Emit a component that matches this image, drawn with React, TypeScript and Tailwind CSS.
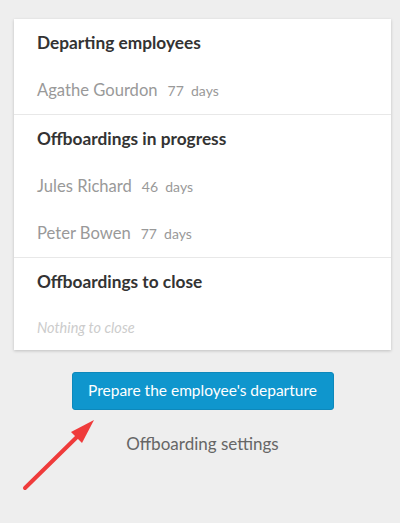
import React from "react";

const font = { fontFamily: '"Lato", "Open Sans", sans-serif' };

function Title({ children }: { children: React.ReactNode }) {
  return (
    <div className="h-[48px] flex items-center px-[23px] text-[17.3px] font-bold text-[#333333]">
      {children}
    </div>
  );
}

function Person({ name, days }: { name: string; days: number }) {
  return (
    <div className="h-[47px] flex items-center px-[23px] text-[#999999]">
      <span className="text-[16.6px]">{name}</span>
      <span className="text-[14px] ml-[10px]">{days}&nbsp; days</span>
    </div>
  );
}

export default function App() {
  return (
    <div className="relative w-[400px] h-[523px] bg-[#eeeeee] overflow-hidden" style={font}>
      <div className="ml-[14px] w-[377px] pt-[19px] flex flex-col items-center">
        <div className="w-full bg-white shadow-[0_1px_3px_rgba(0,0,0,0.2)]">
          <div className="border-b border-[#e8e8e8]">
            <Title>Departing employees</Title>
            <Person name="Agathe Gourdon" days={77} />
          </div>
          <div className="border-b border-[#e8e8e8]">
            <Title>Offboardings in progress</Title>
            <Person name="Jules Richard" days={46} />
            <Person name="Peter Bowen" days={77} />
          </div>
          <div>
            <Title>Offboardings to close</Title>
            <div className="h-[44px] flex items-center px-[23px] text-[14.5px] italic text-[#cccccc]">
              Nothing to close
            </div>
          </div>
        </div>
        <button className="mt-[22px] h-[38px] w-[262px] rounded-[3px] bg-[#0f96cd] border border-[#0d88bb] text-white text-[15.5px]">
          Prepare the employee's departure
        </button>
        <div className="mt-[21px] text-[17px] text-[#666666]">Offboarding settings</div>
      </div>
      <svg className="absolute left-0 top-0" width="400" height="523" viewBox="0 0 400 523">
        <line x1="25" y1="488" x2="80" y2="434" stroke="#ef3b3b" strokeWidth="4" strokeLinecap="round" />
        <polygon points="94,420 71,432 82,443" fill="#ef3b3b" />
      </svg>
    </div>
  );
}
